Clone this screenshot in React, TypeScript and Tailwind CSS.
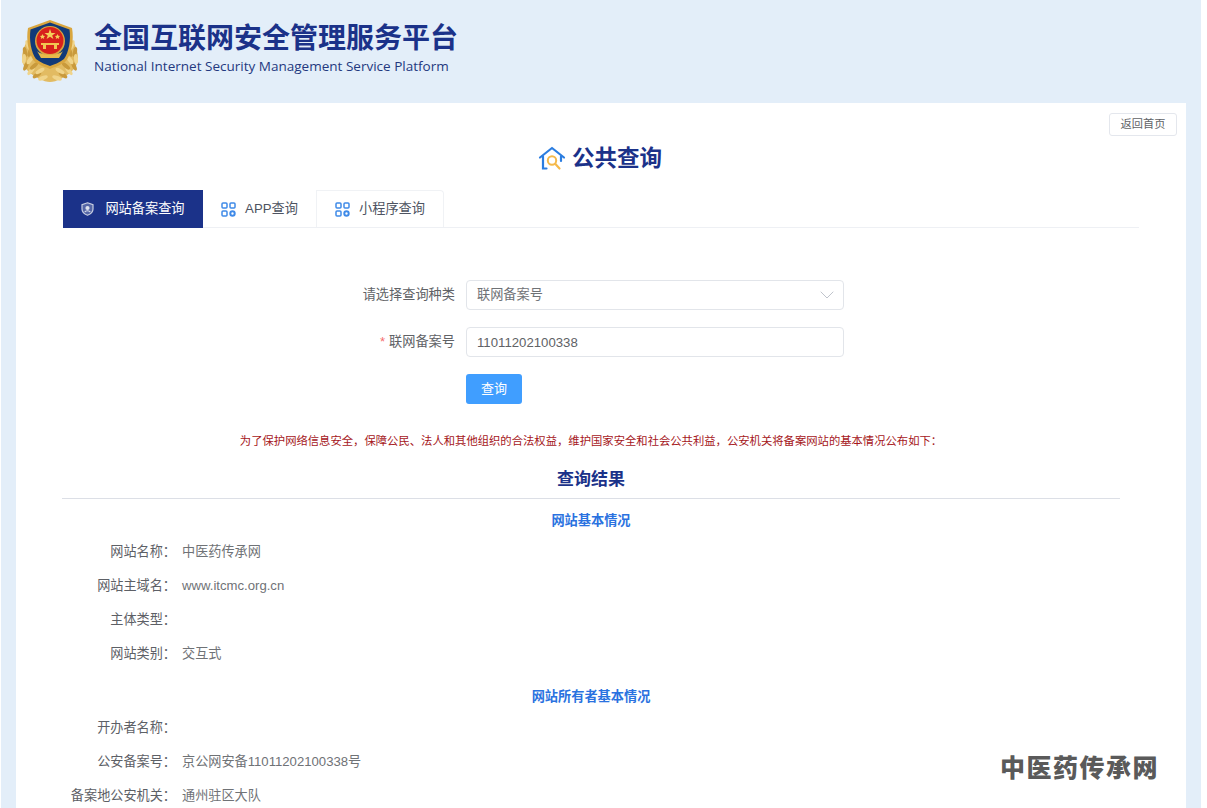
import { ChevronDown } from "lucide-react";

const fontStack = "font-['Liberation_Sans','Noto_Sans_CJK_SC',sans-serif]";

// wreath leaves on one side: x, y, angle
const leaves = [
  [8, 26, -20], [5, 33, -10], [4, 40, 5], [6, 47, 25], [11, 52, 40], [17, 56, 55], [23, 59, 70],
  [10, 33, 20], [10, 41, 35], [14, 47, 50], [20, 52, 60],
];

function Emblem() {
  return (
    <svg width="60" height="64" viewBox="0 0 60 64" className="-ml-px shrink-0 blur-[0.4px]">
      {/* wheat wreath */}
      <path d="M6 24 C0 36 1 46 8 52 C14 58 24 63 30 63 C36 63 46 58 52 52 C59 46 60 36 54 24 Z" fill="#e2bb62" />
      {leaves.map(([x, y, a], i) => (
        <g key={i}>
          <ellipse cx={x} cy={y} rx="2" ry="5" transform={`rotate(${a} ${x} ${y})`} fill={i % 2 ? "#c99a3c" : "#f0d48a"} />
          <ellipse cx={60 - x} cy={y} rx="2" ry="5" transform={`rotate(${-a} ${60 - x} ${y})`} fill={i % 2 ? "#c99a3c" : "#f0d48a"} />
        </g>
      ))}
      {/* shield */}
      <path d="M30 1 L52 9 C54 20 52 34 46 42 C40 47 34 48 30 50 C26 48 20 47 14 42 C8 34 6 20 8 9 Z" fill="#d9a63f" />
      <path d="M30 3.5 L49.5 10.5 C51 21 49 33 44 40 C39 44 34 45.5 30 47 C26 45.5 21 44 16 40 C11 33 9 21 10.5 10.5 Z" fill="#123a78" />
      {/* national emblem */}
      <circle cx="30" cy="22" r="15" fill="#d9a63f" />
      <circle cx="30" cy="21.5" r="13.5" fill="#d8211c" />
      <path d="M30 10 L31.4 14 L35.5 14 L32.2 16.4 L33.4 20 L30 17.8 L26.6 20 L27.8 16.4 L24.5 14 L28.6 14 Z" fill="#f3cf5a" />
      <path d="M22.5 15 l.8 1.8 1.8 .2-1.3 1.2.4 1.8-1.7-.9-1.7 .9.4-1.8-1.3-1.2 1.8-.2z M37.5 15 l.8 1.8 1.8 .2-1.3 1.2.4 1.8-1.7-.9-1.7 .9.4-1.8-1.3-1.2 1.8-.2z" fill="#f3cf5a" />
      <path d="M21 24 H39 V26 H37 V30 H23 V26 H21 Z" fill="#f1c651" />
      <rect x="26" y="26" width="8" height="4" fill="#d8211c" />
      <path d="M17 32 C22 37 38 37 43 32 L39 39 H21 Z" fill="#e9bb4a" />
    </svg>
  );
}

function HouseIcon() {
  return (
    <svg width="28" height="26" viewBox="0 0 28 26" fill="none">
      <path d="M2 11.5 L14 2 L26 11.5" stroke="#2b7de0" strokeWidth="2.2" strokeLinecap="round" strokeLinejoin="round" />
      <path d="M5 10.5 V22.5 H8.5 M23 10.5 V15" stroke="#2b7de0" strokeWidth="2.2" strokeLinecap="round" />
      <circle cx="14" cy="14.5" r="4.2" stroke="#f5b94a" strokeWidth="2" />
      <path d="M17.2 17.8 L21.5 22.5" stroke="#f5b94a" strokeWidth="2.2" strokeLinecap="round" />
    </svg>
  );
}

function ShieldIcon() {
  return (
    <svg width="13" height="14" viewBox="0 0 13 14" fill="none">
      <path d="M6.5 .8 L12 2.6 V7 C12 10.2 9.5 12.2 6.5 13.2 C3.5 12.2 1 10.2 1 7 V2.6 Z" fill="#c2c9e0" fillOpacity=".35" stroke="#c9cfe2" strokeWidth="1.2" />
      <circle cx="6.5" cy="6" r="2.1" fill="#dfe3ef" />
      <path d="M3.8 10 C4.6 8.4 8.4 8.4 9.2 10" stroke="#dfe3ef" strokeWidth="1.1" />
    </svg>
  );
}

function AppsIcon() {
  return (
    <svg width="15" height="15" viewBox="0 0 15 15" fill="none" stroke="#3f8ae8" strokeWidth="1.5">
      <rect x="1" y="1" width="5" height="5" rx="1" />
      <rect x="9" y="1" width="5" height="5" rx="1" />
      <rect x="1" y="9" width="5" height="5" rx="1" />
      <circle cx="11.5" cy="11.5" r="2.2" strokeWidth="2" />
    </svg>
  );
}

function InfoRow({ label, value }: { label: string; value?: string }) {
  return (
    <div className="flex h-[34px] items-center pt-px text-[13.15px] text-[#5d6066]">
      <div className="w-[113px] text-right">{label}：</div>
      <div className="ml-[6px] text-[#6f7276]">{value}</div>
    </div>
  );
}

function SectionTitle({ children }: { children: string }) {
  return <div className="w-[1056px] text-center text-[13.2px] font-bold text-[#2a72e0]">{children}</div>;
}

export default function App() {
  return (
    <div className={`h-[808px] overflow-hidden bg-white ${fontStack}`}>
      <div className="relative ml-px h-full w-[1200px] bg-[#e3eef9]">
        <header className="flex h-[103px] items-start pl-[20px] pt-[19px]">
          <Emblem />
          <div className="ml-[14px] pt-[1px]">
            <div className="text-[28px] font-bold leading-[38px] text-[#1b3289]">全国互联网安全管理服务平台</div>
            <div className="-mt-[2px] font-['Open_Sans',sans-serif] text-[13.53px] leading-[20px] text-[#24397f]">
              National Internet Security Management Service Platform
            </div>
          </div>
        </header>

        <main className="ml-[15px] h-[705px] w-[1170px] bg-white px-[47px]">
          <div className="flex justify-end pt-[10px] -mr-[38px]">
            <button className="h-[23px] w-[68px] rounded-[3px] border border-[#e4e7ed] text-[11.2px] text-[#606266]">返回首页</button>
          </div>

          <div className="mt-[6px] flex h-[34px] items-center justify-center gap-[6px] pr-[2px]">
            <HouseIcon />
            <span className="text-[22.5px] font-bold text-[#1b3289]">公共查询</span>
          </div>

          <div className="mt-[14px] flex h-[38px] border-b border-[#eef0f4] text-[13.2px]">
            <div className="flex h-[38px] w-[140px] items-center justify-center gap-[11px] bg-[#1b3289] text-white">
              <ShieldIcon />
              <span>网站备案查询</span>
            </div>
            <div className="flex w-[114px] items-center justify-center gap-[9px] border-r border-[#f0f2f5] pt-px text-[#4d5361]">
              <AppsIcon />
              <span>APP查询</span>
            </div>
            <div className="flex w-[127px] items-center justify-center gap-[9px] rounded-tr border-r border-t border-[#f0f2f5] text-[#4d5361]">
              <AppsIcon />
              <span>小程序查询</span>
            </div>
          </div>

          <form className="mt-[52px] flex flex-col gap-[17px] text-[13.2px] text-[#606266]">
            <div className="flex items-center">
              <label className="w-[392px] text-right">请选择查询种类</label>
              <div className="ml-[11px] flex h-[30px] w-[378px] items-center justify-between rounded border border-[#e2e5ea] pl-[10px] pr-[4px] text-[#6f7276]">
                <span>联网备案号</span>
                <ChevronDown size={24} strokeWidth={1} className="text-[#c0c4cc]" />
              </div>
            </div>
            <div className="flex items-center">
              <label className="w-[392px] text-right">
                <span className="mr-[4px] text-[#f56c6c]">*</span>联网备案号
              </label>
              <div className="ml-[11px] flex h-[30px] w-[378px] items-center rounded border border-[#e2e5ea] px-[10px] pt-px text-[#606266]">
                11011202100338
              </div>
            </div>
            <div className="ml-[403px]">
              <button type="button" className="h-[30px] w-[56px] rounded-[3px] bg-[#409eff] text-[13px] text-white">查询</button>
            </div>
          </form>

          <div className="mt-[29px] w-[1056px] text-center text-[11.33px] leading-[16px] text-[#a5161a]">
            为了保护网络信息安全，保障公民、法人和其他组织的合法权益，维护国家安全和社会公共利益，公安机关将备案网站的基本情况公布如下：
          </div>

          <div className="-ml-px mt-[18px] w-[1058px] border-b border-[#dcdfe6] pb-[5px] text-center text-[17px] font-bold leading-[26px] text-[#1b3289]">
            查询结果
          </div>

          <div className="mt-[13px] leading-[18px]">
            <SectionTitle>网站基本情况</SectionTitle>
          </div>
          <div className="mt-[4px]">
            <InfoRow label="网站名称" value="中医药传承网" />
            <InfoRow label="网站主域名" value="www.itcmc.org.cn" />
            <InfoRow label="主体类型" />
            <InfoRow label="网站类别" value="交互式" />
          </div>

          <div className="mt-[18px] leading-[18px]">
            <SectionTitle>网站所有者基本情况</SectionTitle>
          </div>
          <div className="mt-[4px]">
            <InfoRow label="开办者名称" />
            <InfoRow label="公安备案号" value="京公网安备11011202100338号" />
            <InfoRow label="备案地公安机关" value="通州驻区大队" />
          </div>
        </main>

        <div className="absolute left-[999px] top-[752px] text-[25px] font-black leading-[32px] tracking-[1.5px] text-[#5a5a5a]">中医药传承网</div>
      </div>
    </div>
  );
}
